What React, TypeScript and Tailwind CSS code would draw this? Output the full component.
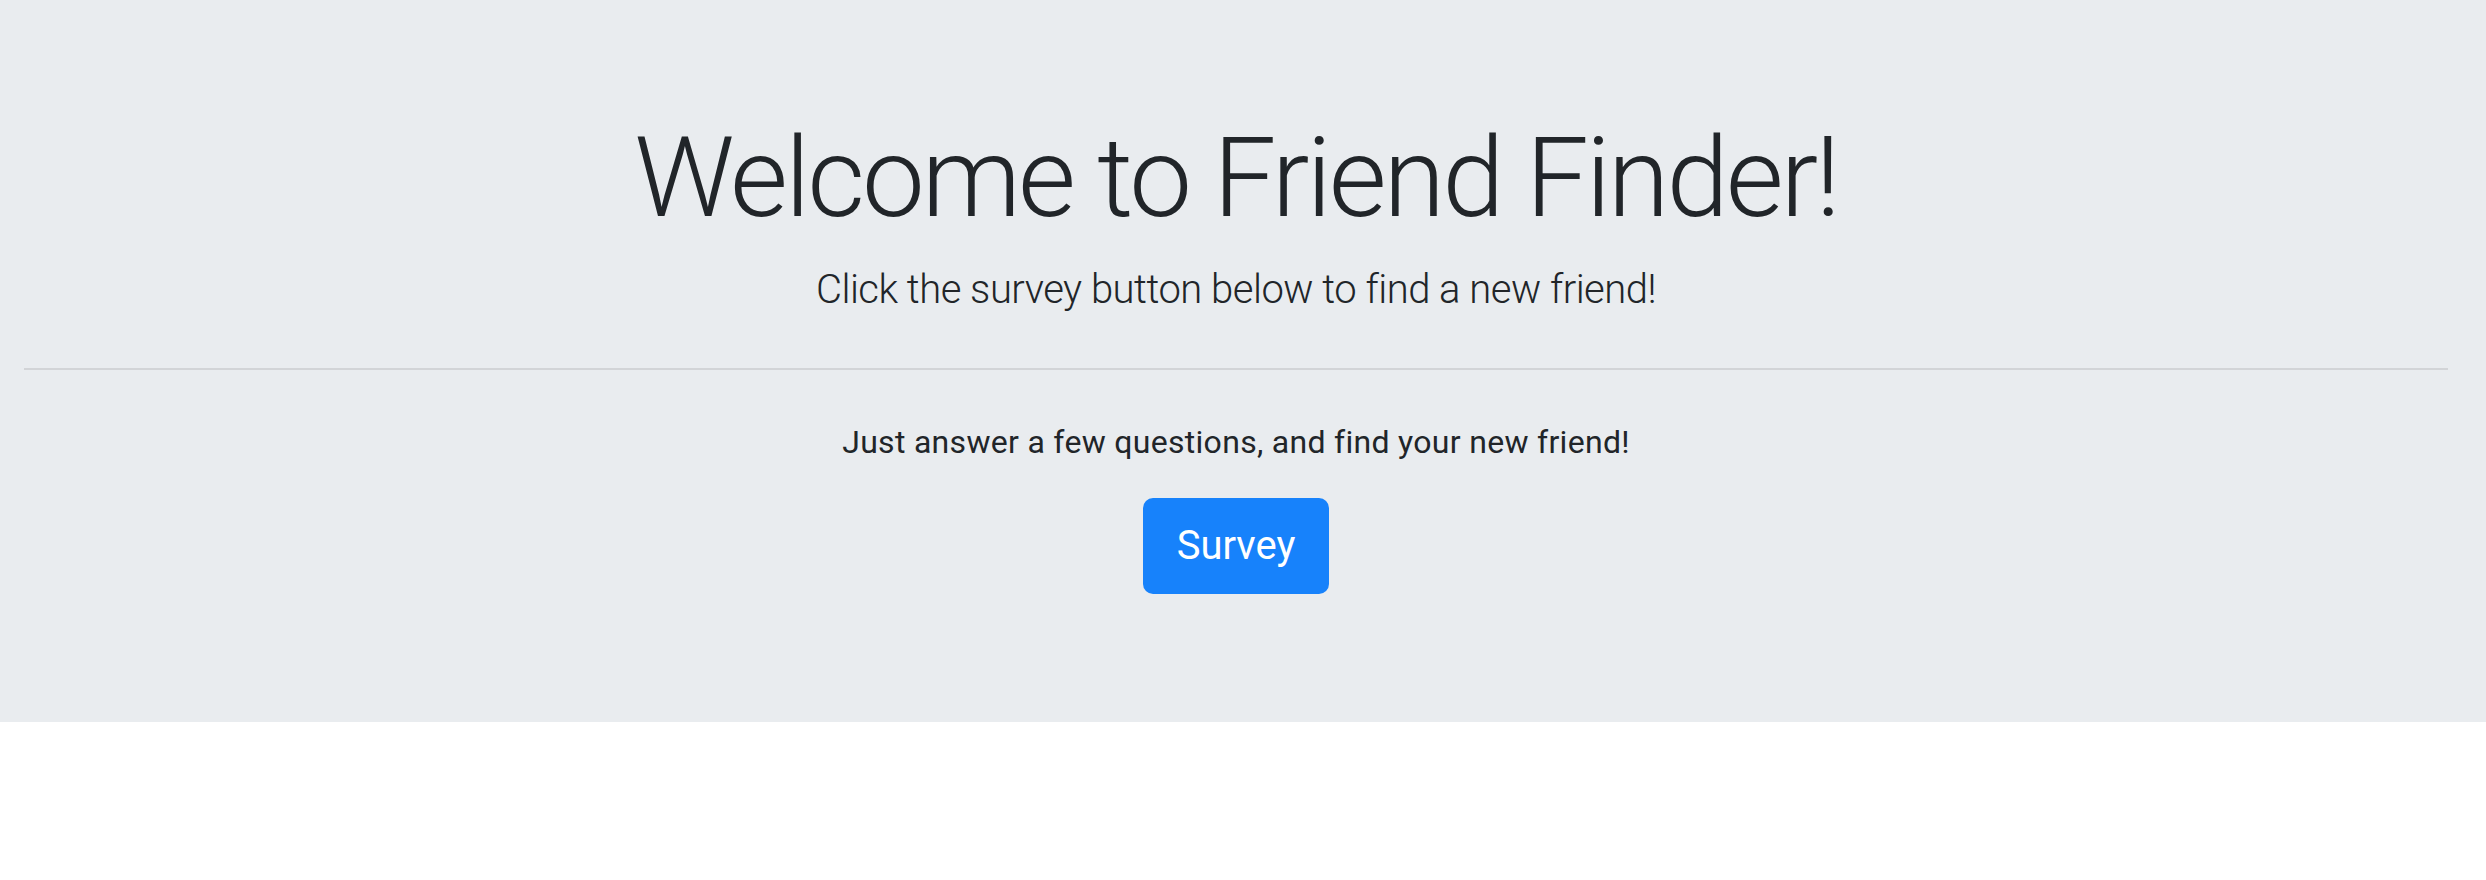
export default function App() {
  return (
    <div className="w-full bg-white min-h-[880px]" style={{ fontFamily: 'Roboto, "Liberation Sans", sans-serif' }}>
      <div className="h-[722px] bg-[#e9ecef] text-[#212529] text-center pt-[111px] pl-[24px] pr-[38px] flex flex-col items-center">
        <h1 className="text-[112px] leading-[134px] font-light tracking-[-3px] m-0">Welcome to Friend Finder!</h1>
        <p className="mt-[15px] text-[40px] leading-[60px] font-light tracking-[-0.5px]">Click the survey button below to find a new friend!</p>
        <hr className="mt-[48px] self-stretch border-0 h-[2px] bg-[#d2d4d7]" />
        <p className="mt-[48px] text-[32px] leading-[48px] tracking-[0.3px]">Just answer a few questions, and find your new friend!</p>
        <button className="mt-[32px] w-[186px] h-[96px] rounded-[10px] bg-[#1782fb] text-white text-[40px] leading-[60px] flex items-center justify-center">
          Survey
        </button>
      </div>
    </div>
  );
}
